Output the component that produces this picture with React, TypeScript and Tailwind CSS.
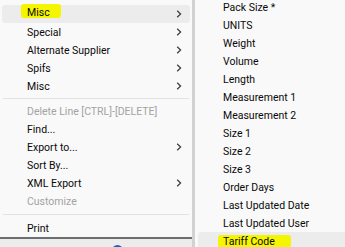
import React from "react";

const Chevron = () => (
  <svg width="6" height="8" viewBox="0 0 6 8" className="shrink-0">
    <path d="M1.2 0.8 L4.6 4 L1.2 7.2" fill="none" stroke="#3a3a3a" strokeWidth="1.2" />
  </svg>
);

type Item = { label: string; sub?: boolean; disabled?: boolean };

const Row = ({ item }: { item: Item }) => (
  <div className="h-[18px] flex items-center justify-between pl-[25px] pr-[8px] mx-[2px]">
    <span className={`leading-[14px] pt-px ${item.disabled ? "text-[#a3a3a3]" : "text-[#0a0a0a]"}`}>
      {item.label}
    </span>
    {item.sub && <Chevron />}
  </div>
);

const Sep = ({ h }: { h: string }) => (
  <div className={`${h} flex items-center px-[3px]`}>
    <div className="h-px w-full bg-[#e2e2e2]" />
  </div>
);

export default function App() {
  const group1: Item[] = [
    { label: "Special", sub: true },
    { label: "Alternate Supplier", sub: true },
    { label: "Spifs", sub: true },
    { label: "Misc", sub: true },
  ];
  const group2: Item[] = [
    { label: "Delete Line [CTRL]-[DELETE]", disabled: true },
    { label: "Find..." },
    { label: "Export to...", sub: true },
    { label: "Sort By..." },
    { label: "XML Export", sub: true },
    { label: "Customize", disabled: true },
  ];
  const subItems = [
    "Pack Size *",
    "UNITS",
    "Weight",
    "Volume",
    "Length",
    "Measurement 1",
    "Measurement 2",
    "Size 1",
    "Size 2",
    "Size 3",
    "Order Days",
    "Last Updated Date",
    "Last Updated User",
  ];
  return (
    <div
      className="w-[345px] h-[247px] overflow-hidden flex bg-[#f9f9f9] text-[10.5px]"
      style={{ fontFamily: 'Roboto, "Noto Sans", sans-serif' }}
    >
      <div className="w-[192px] shrink-0 flex flex-col">
        <div className="bg-[#f9f9f9] flex flex-col border-b-2 border-[#6e6e6e]">
          <div className="-mt-[14px]">
            <Row item={{ label: "Data Sheet Items" }} />
          </div>
          <div className="mt-px h-[18px] flex items-center justify-between pl-[19px] pr-[8px] mx-[2px] rounded-[3px] bg-[#ececec]">
            <span className="self-start -mt-[1px] h-[14px] pt-[4px] pl-[6px] pr-[11px] leading-[10px] bg-[#f5f500] rounded-[3px] text-[#0a0a0a]">
              Misc
            </span>
            <Chevron />
          </div>
          {group1.map((it, i) => (
            <Row key={i} item={it} />
          ))}
          <Sep h="h-[7px]" />
          {group2.map((it, i) => (
            <Row key={i} item={it} />
          ))}
          <Sep h="h-[9px]" />
          <Row item={{ label: "Print" }} />
        </div>
        <div className="flex-1 bg-[#ececec] pl-[112px] pt-[6px]">
          <div className="w-[11px] h-[11px] rounded-full bg-[#1565c0]" />
        </div>
      </div>
      <div className="flex-1 flex flex-col border-l-[3px] border-[#d2d2d2] bg-[#f9f9f9] -mt-[2px]">
        {subItems.map((s, i) => (
          <div key={i} className="h-[18px] shrink-0 flex items-center pl-[28px]">
            <span className="text-[#0a0a0a] leading-[14px] pt-px">{s}</span>
          </div>
        ))}
        <div className="h-[18px] shrink-0 flex items-start pt-[3px] pl-[20px] ml-[3px] bg-[#ececec] rounded-l-[3px]">
          <span className="h-[13px] leading-[13px] pl-[5px] pr-[16px] bg-[#f5f500] rounded-[3px] text-[#0a0a0a]">
            Tariff Code
          </span>
        </div>
      </div>
    </div>
  );
}
